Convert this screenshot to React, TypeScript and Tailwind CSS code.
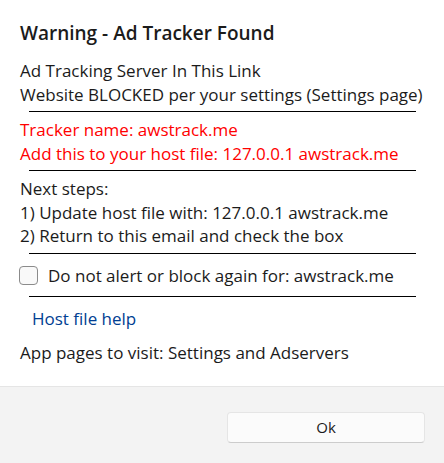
import { useState } from 'react';

const Rule = ({ className = '' }: { className?: string }) => (
  <div className={`ml-[9px] h-px w-[387px] shrink-0 bg-black ${className}`} />
);

export default function App() {
  const [skip, setSkip] = useState(false);
  const tracker = 'awstrack.me';

  return (
    <div className="flex h-[463px] w-[444px] flex-col bg-white text-[#1b1b1b]" style={{ fontFamily: '"Open Sans", "Noto Sans", sans-serif' }}>
      {/* Body */}
      <div className="flex flex-1 flex-col px-[20px] pt-[21.3px] text-[17px] leading-[23.3px]">
        <h1 className="text-[19px] font-semibold leading-[24px]">Warning - Ad Tracker Found</h1>

        <div className="mt-[14.2px]">
          <p>Ad Tracking Server In This Link</p>
          <p>Website BLOCKED per your settings (Settings page)</p>
        </div>
        <Rule className="mt-[4.9px]" />

        <div className="mt-[6.45px] text-[#ff0000]">
          <p>Tracker name: {tracker}</p>
          <p>Add this to your host file: 127.0.0.1 {tracker}</p>
        </div>
        <Rule className="mt-[4.95px]" />

        <div className="mt-[6.45px]">
          <p>Next steps:</p>
          <p>1) Update host file with: 127.0.0.1 {tracker}</p>
          <p>2) Return to this email and check the box</p>
        </div>
        <Rule className="mt-[5.65px]" />

        <label className="mt-[9.75px] flex items-center gap-[10px]">
          <input
            type="checkbox"
            checked={skip}
            onChange={(e) => setSkip(e.target.checked)}
            className="ml-[-1px] h-[19px] w-[19px] shrink-0 appearance-none rounded-[4px] border border-[#8b8b8b] bg-[#f9f9f9]"
          />
          <span>Do not alert or block again for: {tracker}</span>
        </label>
        <Rule className="mt-[8.95px]" />

        <a href="#" className="mt-[10.45px] block pl-[12px] text-[#003e92]">Host file help</a>
        <p className="mt-[10px]">App pages to visit: Settings and Adservers</p>
      </div>

      {/* Footer */}
      <div className="flex h-[77px] shrink-0 items-start justify-end border-t border-[#e5e5e5] bg-[#f3f3f3] pt-[25px] pr-[19px]">
        <button className="h-[31px] w-[198px] rounded-[4px] border border-[#e5e5e5] border-b-[#cccccc] bg-[#fbfbfb] text-[15px] text-[#1b1b1b]">
          Ok
        </button>
      </div>
    </div>
  );
}
